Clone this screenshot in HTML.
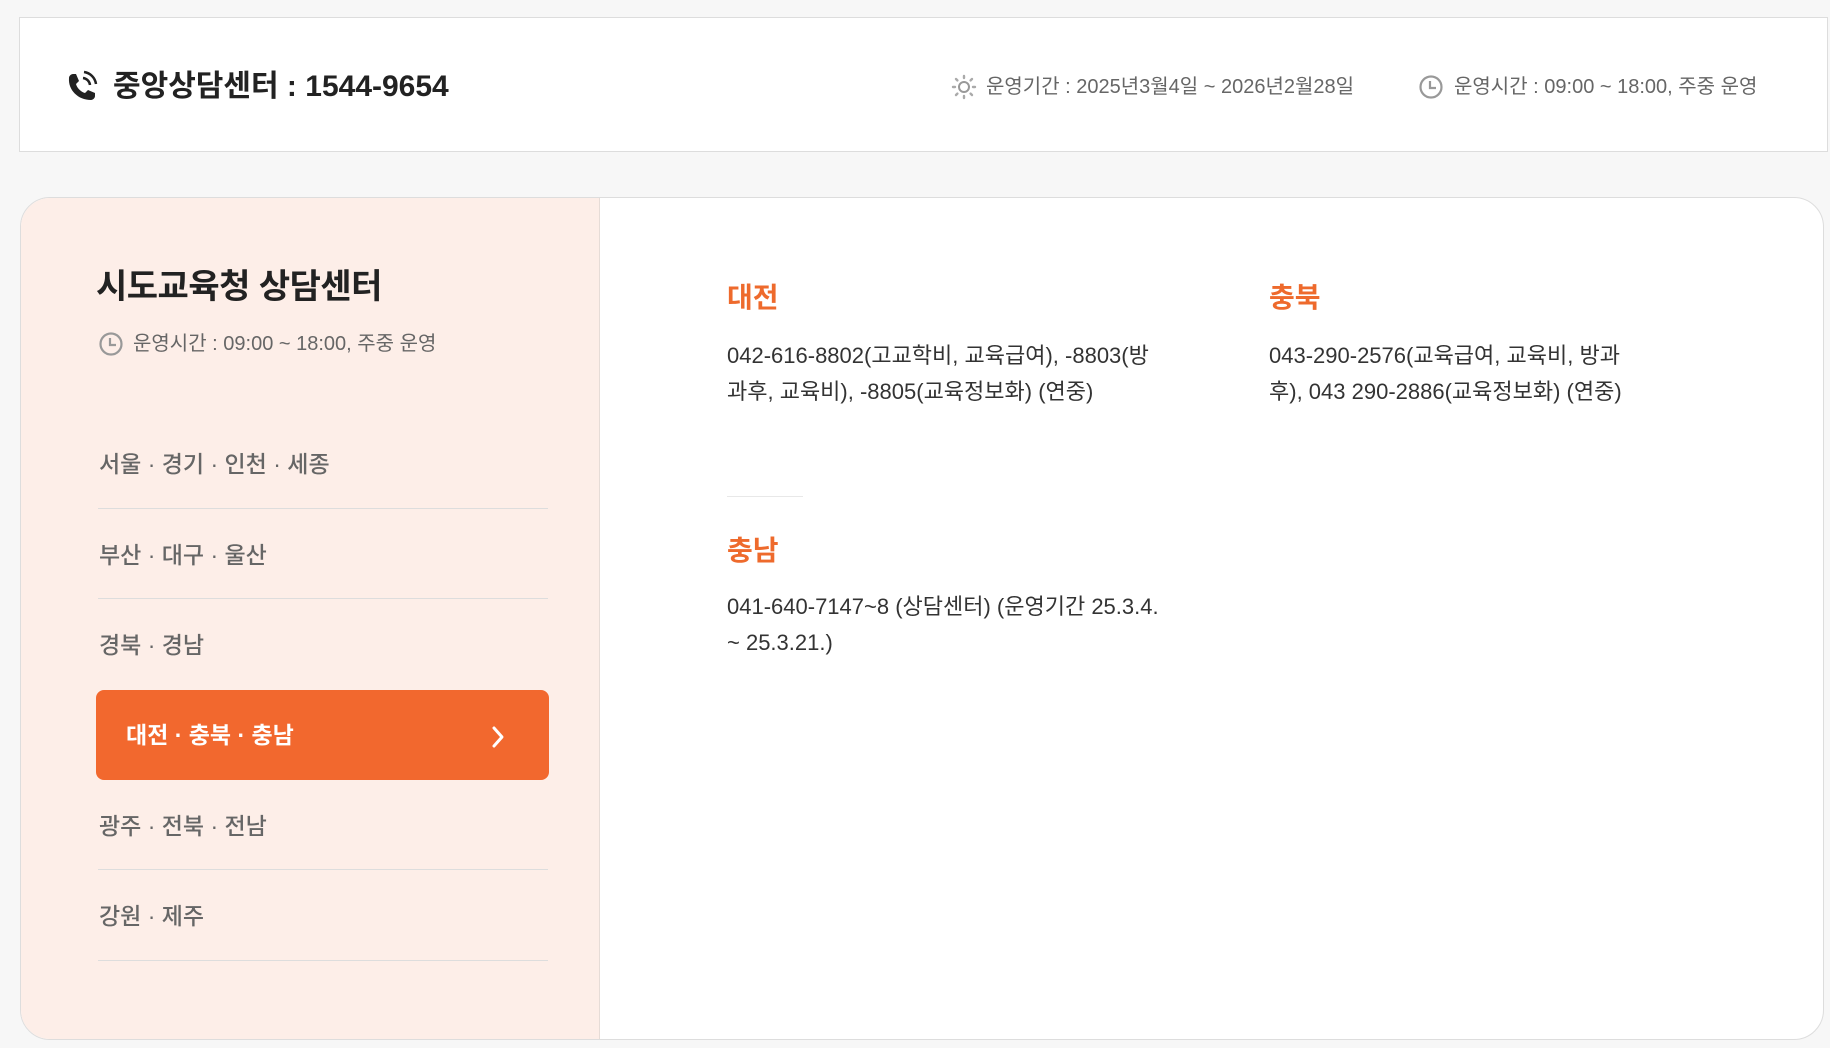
<!DOCTYPE html>
<html lang="ko">
<head>
<meta charset="utf-8">
<style>
*{margin:0;padding:0;box-sizing:border-box}
html,body{width:1830px;height:1048px;overflow:hidden;background:#f7f7f7;font-family:"Liberation Sans","Noto Sans CJK KR",sans-serif;color:#222}
.abs{position:absolute;white-space:nowrap}
.top{position:absolute;left:19px;top:17px;width:1809px;height:135px;background:#fff;border:1px solid #ddd}
.panel{position:absolute;left:20px;top:197px;width:1804px;height:843px;background:#fff;border:1px solid #ddd;border-radius:30px;overflow:hidden}
.left{position:absolute;left:0;top:0;width:579px;height:100%;background:#fdeee8;border-right:1px solid #e6dcd7}
.sep{position:absolute;left:97px;width:450px;height:1px;background:#ddd}
.menu{position:absolute;left:98px;font-size:23px;color:#666;font-weight:500;line-height:30px;white-space:nowrap}
.h{position:absolute;font-size:28px;font-weight:700;color:#ee6a2c;line-height:36px}
.t{position:absolute;font-size:22px;color:#333;line-height:36px;white-space:nowrap}
</style>
</head>
<body>
<div class="top"></div>
<svg class="abs" style="left:63px;top:69px" width="36" height="36" viewBox="0 0 36 36">
<path d="M6 9c0-2 2-4 4-4l3 0 3 7-3 3c1 4 5 8 9 9l3-3 7 3 0 3c0 2-2 4-4 4C15 31 5 21 6 9z" fill="#222"/>
<path d="M20 9a8 8 0 0 1 7 7" stroke="#222" stroke-width="2.5" fill="none"/>
<path d="M21 3a14 14 0 0 1 12 12" stroke="#222" stroke-width="2.5" fill="none"/>
</svg>
<div class="abs" style="left:113px;top:67px;font-size:30px;font-weight:700;color:#222;line-height:40px">중앙상담센터 : 1544-9654</div>

<svg class="abs" style="left:951px;top:74px" width="26" height="26" viewBox="0 0 26 26">
<circle cx="13" cy="13" r="5" fill="none" stroke="#999" stroke-width="2"/>
<g stroke="#aaa" stroke-width="2.4" stroke-linecap="round"><path d="M13 2v2M13 22v2M2 13h2M22 13h2M5 5l1.4 1.4M19.6 19.6L21 21M5 21l1.4-1.4M19.6 6.4L21 5"/></g>
</svg>
<div class="abs" style="left:986px;top:73px;font-size:20px;color:#666;line-height:28px">운영기간 : 2025년3월4일 ~ 2026년2월28일</div>
<svg class="abs" style="left:1418px;top:74px" width="26" height="26" viewBox="0 0 26 26">
<circle cx="13" cy="13" r="10.5" fill="none" stroke="#999" stroke-width="2.2"/>
<path d="M12 7v7h6" fill="none" stroke="#999" stroke-width="2.2"/>
</svg>
<div class="abs" style="left:1454px;top:73px;font-size:20px;color:#666;line-height:28px">운영시간 : 09:00 ~ 18:00, 주중 운영</div>

<div class="panel">
  <div class="left">
    <div class="abs" style="left:75px;top:67px;font-size:34px;font-weight:700;color:#222;line-height:44px;letter-spacing:-0.5px">시도교육청 상담센터</div>
    <svg class="abs" style="left:77px;top:133px" width="26" height="26" viewBox="0 0 26 26">
      <circle cx="13" cy="13" r="10.5" fill="none" stroke="#999" stroke-width="2.2"/>
      <path d="M12 7v7h6" fill="none" stroke="#999" stroke-width="2.2"/>
    </svg>
    <div class="abs" style="left:112px;top:132px;font-size:20px;color:#666;line-height:28px">운영시간 : 09:00 ~ 18:00, 주중 운영</div>

    <div class="menu" style="top:251px;left:78px">서울 · 경기 · 인천 · 세종</div>
    <div class="sep" style="top:310px;left:77px"></div>
    <div class="menu" style="top:342px;left:78px">부산 · 대구 · 울산</div>
    <div class="sep" style="top:400px;left:77px"></div>
    <div class="menu" style="top:432px;left:78px">경북 · 경남</div>
    <div class="abs" style="left:75px;top:492px;width:453px;height:90px;background:#f2682e;border-radius:8px"></div>
    <div class="menu" style="top:522px;left:105px;color:#fff;font-weight:700">대전 · 충북 · 충남</div>
    <svg class="abs" style="left:467px;top:525px" width="20" height="28" viewBox="0 0 20 28">
      <path d="M6 5l8 9-8 9" fill="none" stroke="#fff" stroke-width="3" stroke-linecap="round" stroke-linejoin="round"/>
    </svg>
    <div class="menu" style="top:613px;left:78px">광주 · 전북 · 전남</div>
    <div class="sep" style="top:671px;left:77px"></div>
    <div class="menu" style="top:703px;left:78px">강원 · 제주</div>
    <div class="sep" style="top:762px;left:77px"></div>
  </div>

  <div class="h" style="left:706px;top:82px">대전</div>
  <div class="t" style="left:706px;top:140px">042-616-8802(고교학비, 교육급여), -8803(방<br>과후, 교육비), -8805(교육정보화) (연중)</div>
  <div class="h" style="left:1248px;top:82px">충북</div>
  <div class="t" style="left:1248px;top:140px">043-290-2576(교육급여, 교육비, 방과<br>후), 043 290-2886(교육정보화) (연중)</div>
  <div class="abs" style="left:706px;top:298px;width:76px;height:1px;background:#e8e8e8"></div>
  <div class="h" style="left:706px;top:335px">충남</div>
  <div class="t" style="left:706px;top:391px">041-640-7147~8 (상담센터) (운영기간 25.3.4.<br>~ 25.3.21.)</div>
</div>
</body>
</html>
